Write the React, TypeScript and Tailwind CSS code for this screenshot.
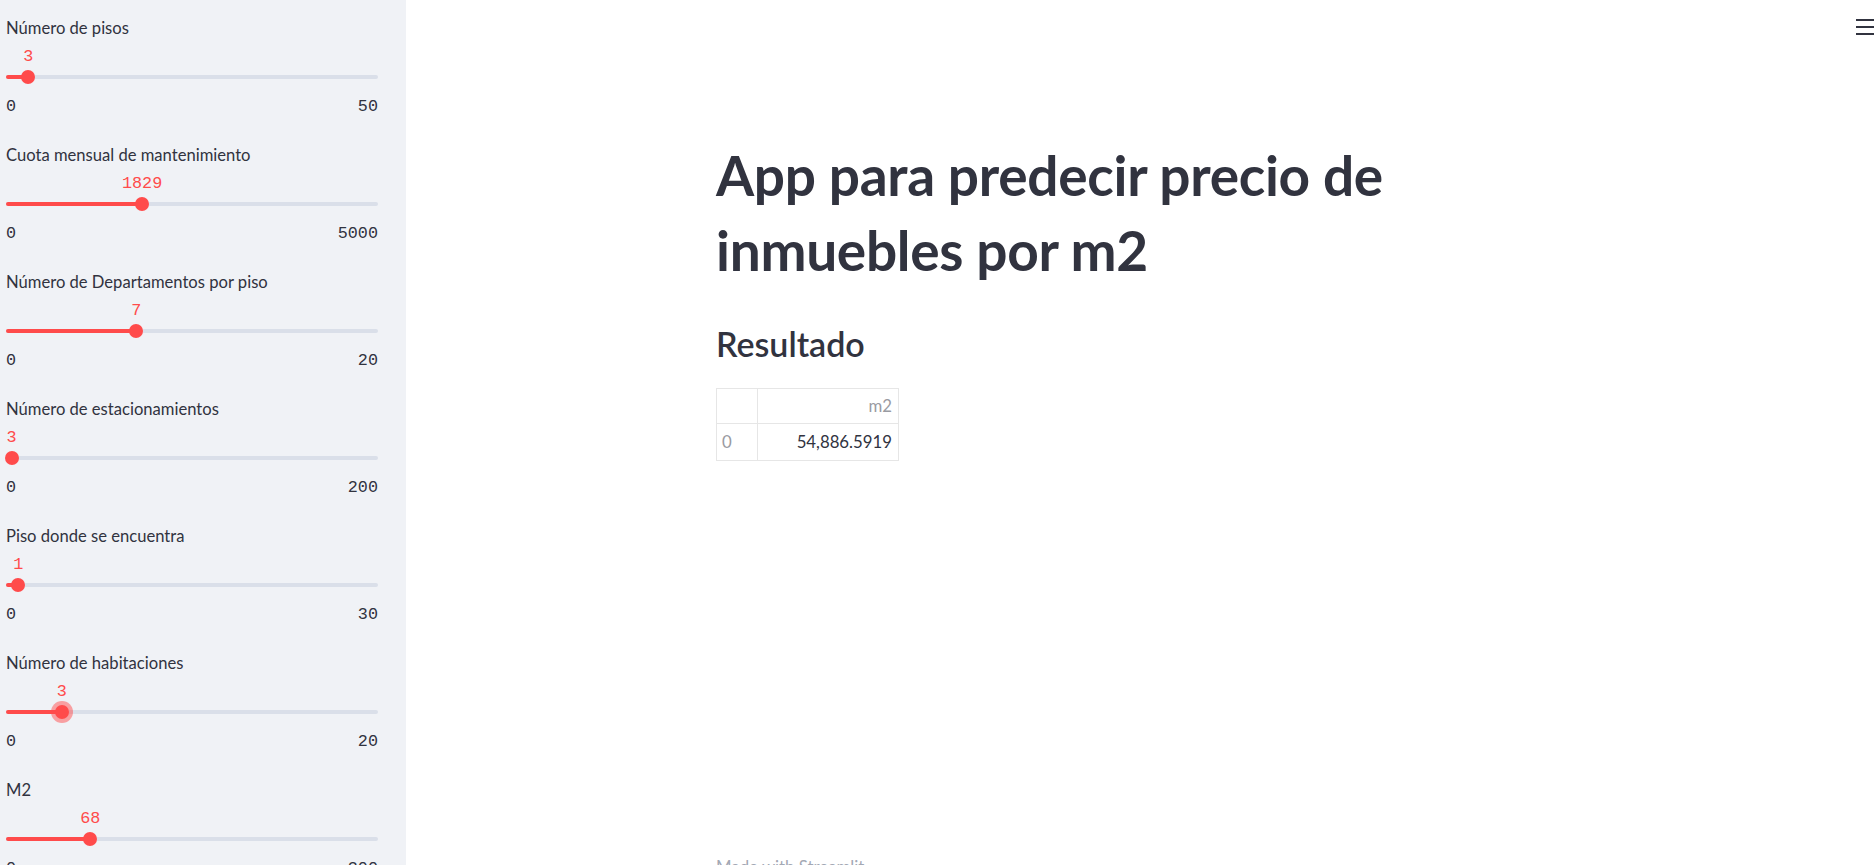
const sliders = [
  { label: 'Número de pisos', value: 3, min: 0, max: 50 },
  { label: 'Cuota mensual de mantenimiento', value: 1829, min: 0, max: 5000 },
  { label: 'Número de Departamentos por piso', value: 7, min: 0, max: 20 },
  { label: 'Número de estacionamientos', value: 3, min: 0, max: 200 },
  { label: 'Piso donde se encuentra', value: 1, min: 0, max: 30 },
  { label: 'Número de habitaciones', value: 3, min: 0, max: 20, focused: true },
  { label: 'M2', value: 68, min: 0, max: 300 },
];

const TRACK = 372;

function Slider({ label, value, min, max, focused }: (typeof sliders)[number] & { focused?: boolean }) {
  const pos = ((value - min) / (max - min)) * TRACK;
  return (
    <div className="mb-[19px]">
      <div className="h-[22px] text-[16.6px] leading-[22px] text-[#31333f]">{label}</div>

      {/* Track + thumb */}
      <div className="relative h-[50px] w-[372px]">
        <div className="absolute left-0 right-0 top-[36px] h-[4px] rounded-full bg-[#dadfe9]" />
        <div
          className="absolute left-0 top-[36px] h-[4px] rounded-full bg-[#ff4b4b]"
          style={{ width: pos }}
        />
        {focused && (
          <div
            className="absolute top-[27px] h-[22px] w-[22px] -translate-x-1/2 rounded-full bg-[#ff4b4b]/50"
            style={{ left: pos }}
          />
        )}
        <div
          className="absolute top-[31px] h-[14px] w-[14px] -translate-x-1/2 rounded-full bg-[#ff4b4b]"
          style={{ left: pos }}
        />
        <div
          className="absolute top-[8px] -translate-x-1/2 font-['Liberation_Mono',monospace] text-[16.8px] leading-[20px] text-[#ff4b4b]"
          style={{ left: pos }}
        >
          {value}
        </div>
      </div>

      {/* Min / max */}
      <div className="flex h-[36px] w-[372px] items-center justify-between font-['Liberation_Mono',monospace] text-[16.8px] text-[#31333f]">
        <span>{min}</span>
        <span>{max}</span>
      </div>
    </div>
  );
}

export default function App() {
  return (
    <div className="flex h-[865px] overflow-hidden bg-white font-['Lato',sans-serif] text-[#31333f]">
      {/* Sidebar */}
      <aside className="w-[406px] shrink-0 bg-[#f0f2f6] pl-[6px] pt-[17px]">
        {sliders.map((s) => (
          <Slider key={s.label} {...s} />
        ))}
      </aside>

      {/* Main */}
      <main className="flex flex-1 flex-col">
        <div className="flex h-[40px] justify-end pr-[1px] pt-[19px]">
          <svg width="18" height="16" viewBox="0 0 18 16">
            <rect x="0" y="0" width="18" height="2" fill="#31333f" />
            <rect x="0" y="7" width="18" height="2" fill="#31333f" />
            <rect x="0" y="14" width="18" height="2" fill="#31333f" />
          </svg>
        </div>

        <div className="flex flex-1 flex-col pl-[310px]">
          <h1 className="mt-[98px] text-[55px] font-bold leading-[75px] tracking-[-0.3px]">
            App para predecir precio de
            <br />
            inmuebles por m2
          </h1>

          <h3 className="mt-[36px] text-[34px] font-semibold leading-[40px]">Resultado</h3>

          <table className="mt-[24px] w-[183px] border-collapse text-[16.8px]">
            <thead>
              <tr className="h-[35px]">
                <th className="w-[41px] border border-[#e6e6e6]" />
                <th className="border border-[#e6e6e6] pr-[6px] text-right font-normal text-[#9a9ba2]">m2</th>
              </tr>
            </thead>
            <tbody>
              <tr className="h-[37px]">
                <td className="border border-[#e6e6e6] pl-[5px] text-[#9a9ba2]">0</td>
                <td className="border border-[#e6e6e6] pr-[6px] text-right">54,886.5919</td>
              </tr>
            </tbody>
          </table>

          <div className="mt-auto translate-y-[14px] text-[16.8px] text-[#a3a8b4]">
            Made with <span className="text-[#a3a8b4]">Streamlit</span>
          </div>
        </div>
      </main>
    </div>
  );
}
